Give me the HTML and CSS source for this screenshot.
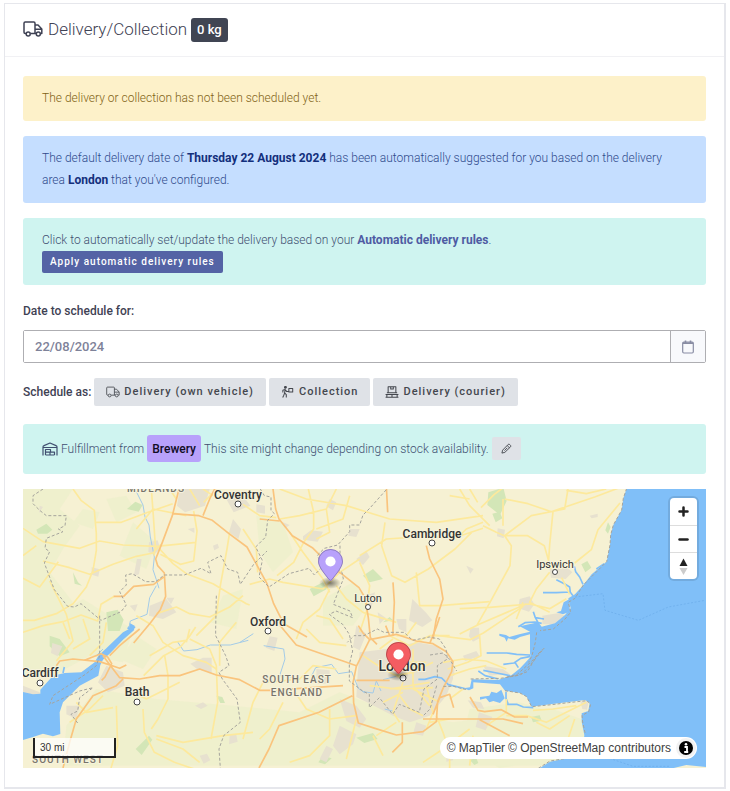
FILE: index.html
```html
<!DOCTYPE html>
<html lang="en">
<head>
<meta charset="utf-8">
<meta name="viewport" content="width=device-width, initial-scale=1">
<title>Delivery/Collection</title>
<link rel="stylesheet" href="styles.css">
</head>
<body>
<svg class="defs" aria-hidden="true">
  <symbol id="truck" viewBox="0 0 20 16">
    <path d="M3 12.5H2.2A1.2 1.2 0 0 1 1 11.3V2.2A1.2 1.2 0 0 1 2.2 1h8.6A1.2 1.2 0 0 1 12 2.2v10.3H7.5M12 4h3l3.8 4v4.500H17.500M12 8.200h6.500M12 12.500h1"/><circle cx="5.200" cy="13" r="2"/><circle cx="15.300" cy="13" r="2"/>
  </symbol>
  <symbol id="carry" viewBox="0 0 14 14">
    <circle cx="4" cy="1.600" r="1.100" fill="currentColor"/><path d="M3.800 3.800 3 8l2 2v3.500M3 8.500 2 11 .8 13.500M3.500 4 1 5v2.500M4 4.500l1.500 2H8M8 3h4.500v4H8z"/>
  </symbol>
  <symbol id="pallet" viewBox="0 0 16 14">
    <path d="M3.500 1h9v7h-9zM6.500 1v2.500h3V1M.500 10h15M.500 13h15M2 10v3M8 10v3M14 10v3M2 8h12"/>
  </symbol>
  <symbol id="warehouse" viewBox="0 0 16 14">
    <path d="M1 13.500V5Q1 4 2 3.600L8 1l6 2.600q1 .4 1 1.400v8.500M1 5.500h14M3.500 13V7.500h5V10M3.500 10.200h9V13M3.500 13h9M8 10v3"/>
  </symbol>
  <symbol id="pencil" viewBox="0 0 12 12">
    <path d="M1 11l.8-3.200 6-6.200a1.200 1.200 0 0 1 1.600 0l1 1a1.200 1.200 0 0 1 0 1.600l-6.200 6zM6.800 2.800l2.500 2.500M3.800 8.300l3-3"/>
  </symbol>
  <symbol id="calendar" viewBox="0 0 12 14">
    <rect x=".700" y="2.200" width="10.600" height="10.800" rx="1.200"/><path d="M.700 3.300h10.600M3.500.500v2M8.500.500v2" stroke-width="1.600"/>
  </symbol>
  <symbol id="pin" viewBox="0 0 27 41">
    <path stroke="none" d="M27 13.500c0 5.600-6.700 13.600-11.700 19.900-1 1.300-2.600 1.300-3.600 0C6.700 27 0 19.100 0 13.500a13.500 13.500 0 0 1 27 0z"/>
    <path d="M26.500 13.500C26.500 19 19.800 27 14.900 33c-.8 1-2 1-2.800 0C7.200 27 .5 19 .5 13.500a13 13 0 0 1 26 0z" fill="none" stroke="#000" stroke-opacity=".25"/>
    <circle cx="13.500" cy="13.500" r="5.500" fill="#fff" stroke="none"/>
  </symbol>
</svg>

<main class="card">
  <header class="card-header">
    <h1><svg class="icon icon-title"><use href="#truck"/></svg> Delivery/Collection</h1>
    <span class="badge badge-dark">0 kg</span>
  </header>

  <div class="card-body">
    <p class="alert alert-warning">The delivery or collection has not been scheduled yet.</p>
    <p class="alert alert-info">The default delivery date of <strong>Thursday 22 August 2024</strong> has been automatically suggested for you based on the delivery area <strong>London</strong> that you've configured.</p>
    <div class="alert alert-teal">
      <p>Click to automatically set/update the delivery based on your <a href="#rules">Automatic delivery rules</a>.</p>
      <button type="button" class="btn btn-primary">Apply automatic delivery rules</button>
    </div>

    <label class="label" for="date">Date to schedule for:</label>
    <div class="input-group">
      <input id="date" type="text" value="22/08/2024">
      <button type="button" aria-label="Open calendar"><svg class="icon icon-calendar"><use href="#calendar"/></svg></button>
    </div>

    <div class="schedule">
      <span class="label">Schedule as:</span>
      <button type="button" class="btn btn-light"><svg class="icon icon-wide"><use href="#truck"/></svg>Delivery (own vehicle)</button>
      <button type="button" class="btn btn-light"><svg class="icon icon-wide"><use href="#carry"/></svg>Collection</button>
      <button type="button" class="btn btn-light"><svg class="icon icon-wide"><use href="#pallet"/></svg>Delivery (courier)</button>
    </div>

    <div class="alert alert-teal fulfillment">
      <svg class="icon icon-site"><use href="#warehouse"/></svg>
      <span>Fulfillment from</span>
      <span class="badge badge-purple">Brewery</span>
      <span>This site might change depending on stock availability.</span>
      <button type="button" class="btn btn-light btn-edit" aria-label="Change site"><svg class="icon icon-edit"><use href="#pencil"/></svg></button>
    </div>

    <section class="map" aria-label="Map">
      <svg class="map-canvas" viewBox="0 0 683 279" preserveAspectRatio="xMidYMid slice">
        <defs>
          <radialGradient id="shade"><stop offset="0" stop-opacity=".5"/><stop offset="1" stop-opacity="0"/></radialGradient>
        </defs>
        <rect class="land" width="683" height="279"/>
        <g transform="scale(.33333)">
          <!-- grassland -->
          <g class="grass">
            <path d="M0 0H150L110 60 170 110 120 180 80 250 150 340 60 420 0 460zM100 380 180 330 260 380 330 420 300 520 200 500 90 560 0 560V430zM330 100 400 160 370 240 290 200zM600 320 660 300 640 420 560 400zM250 30l60-10 30 50-60 30zM180 60l50 10-20 50-60-20zM220 600l180 30 230 20 200 20 120-60 160 60 180 30 300-40 170 60 60 110H120l10-120zM340 440l60 40-40 60-70-30zM700 80l80 20 30 90-60 60-40-60zM900 330l90-50 50 60-50 70-90 0zM1340 660l150-20 100 30 60 60-40 80-180 27-120-60z"/>
          </g>
          <g class="wood">
            <path d="M40 122l30-18 18 18-15 12-28 0zM312 60l25-22 22 10-12 20zM250 370l34-8 18 30-12 34-35 0zM80 440l30 10 30 40-30 12-30-30zM338 780l40-40 10 12-32 46zM580 620l18 4 8 18-14 0zM150 250l15 30 12 10-22-6zM1396 10l45-14 10 40-20 42-38-30zM1408 74l22-6 8 20-20 12zM1675 226l18-10 12 20-18 14zM1755 100l8 14-8 20-8-10zM1524 684l26-5 6 16-26 5zM1340 812l20-4 6 14-12 6zM1000 746l50-14 14 18-40 12zM900 800l26 8-20 18-20-6zM860 300l40-20 12 20-40 22zM1020 260l30-20 30 30-40 10zM1080 400l20-16 10 10z"/>
          </g>
          <!-- towns -->
          <g class="town">
            <path d="M470 0h90l-14 50-60 20-24-20zM630 90l24 30-8 30-28-20zM378 160l26-6 8 26-20 18-16-10zM342 210l14 0-8 46-16 6zM206 235l24 6-4 22-20-6zM380 350l50-20 30 40-40 20-42-10zM430 326l24 0-10 20zM610 30l50-10 22 30-50 20zM540 506l26 0 0 46-44-12-20-16zM250 530l50 20 5 40-50 20-30-30zM130 650l40 0-10 40-30-14zM88 462l30 10-14 30-20-10zM0 590l50 20 10 30-60 0zM620 738l20 0 4 20-26 8zM320 350l24-4-8 22zM494 120l20-4 0 16zM516 650l24-10 14 10-20 10zM530 800l22-6 10 20-20 10zM50 50l10 4-12 18zM570 170l14-6 4 12-14 8zM864 124l36 4-16 30-44-6 0-10zM1000 210l30-24 10 18-20 24zM1030 320l26-10-10 44-20-12zM1064 370l24 16-18 20zM920 30l20 10-10 24-20-12zM980 120l30 0-10 24-24-4zM700 46l26 4 0 24-26-4zM740 442l24 4-10 40-26-10zM780 100l20 8-14 10z"/>
            <path d="M1010 490l80-10 90-20 60 10 50 50 0 50-20 50-50 60-60 20-50-20-50-26-60-30 4-70zM1000 410l30 24-20 50-20-10zM1168 330l40 40 20 24-30 20-40-20zM1120 390l30 0 0 40-22-10zM880 540l40 4 0 40-40 0zM950 630l50 20 30 40-20 26-40-20zM950 710l50 26-10 30-40 30-20-26zM1180 700l30 10-10 30-30-6zM910 770l20 10-20 40-20-10zM1270 800l20-6 0 20-20 4zM1424 118l22 4-4 26-20-6zM1490 330l30-8 14 24-16 22-32-10zM1580 240l50-6 18 16-20 20-44-4zM1558 380l50-8 20 10-30 24-40 0zM1342 416l26 0 2 32-20 10-12-16zM1320 500l40-14 10 16-44 14zM1380 530l60 10 20 14-60 6zM1368 670l40 14-20 40-30-10zM1334 634l40 6 10 20-34-4zM1672 638l26-4-6 28-14-2zM1700 80l24-6 0 10-18 4zM1330 230l22 10-10 14zM1254 530l40 0 0 30-40 6z"/>
          </g>
          <!-- sea and estuaries -->
          <g class="water">
            <path d="M1811-2 1801 28 1796 63 1771 108 1763 138 1761 168 1751 218 1721 243 1706 256 1681 288 1656 316 1636 328 1643 358 1626 378 1596 403 1556 413 1546 400 1490 412 1521 428V493L1523 503 1508 520 1491 538 1466 558 1426 573 1346 571 1341 595 1321 598 1338 604 1351 598V580L1431 586 1446 605 1491 612 1511 623 1526 653 1581 646 1631 640 1686 633 1700 641 1696 666 1676 673V698L1684 738 1681 768 1631 808 1581 818 1546 840H1940L1990 828 2049 834V-2z"/>
            <path d="M0 609 30 616 52 614 52 602 90 560 125 552 175 550 215 520 226 500 250 478 300 430 318 420 320 402 335 410 333 424 300 452 262 492 240 512 232 528 226 560 170 590 120 640 110 670 112 735 90 742 60 734 30 744 0 753zM312 418l10-12 16 8-12 14z"/>
            <path d="M1371 624l28-4 6-12 16 4 14-10 10 26-14 14-20-6-12 4-10-12-18 4z"/>
            <path d="M1640 330l-18 10-8 26-14 4 20 6 20-8z"/>
            <path d="M1429 434l20 4 10 6 30-8 32-8 0 8-30 8-16 8-20-4-4 10-6-12-16-6z"/>
          </g>
          <g class="creek">
            <path d="M1600 272l24 12 16 10 2 16 8 10M1560 311h40l40-2M1654 232l4 16 12 16 10 22M1720 240l24-16M1486 413l20-12 30-2 20 4M1531 368l6 18 8 14M1537 386l26 4M1391 492l60 0 30 4 40 2M1441 526l32-4 20-14 30-6M1476 520l10 16M1366 546l20 14 40 10M1381 544l40 8 40 8M1186 571l20 0 30-8 20 4 20 20 25 6 24 6M1449 608l0 20 6 16M1451 646l30 0 20 8 30 2M120 552l4-18"/>
          </g>
          <g class="river">
            <path d="M340 8l20 40 6 36 12 24 4 36 12 60-4 38 10 30 8 26M400 290l-20 36-8 50-50 20-4 20M462 456l20 30 40-4 40-14 60 0 54-14M651 460l40-26M722 470l60 10 4 30-16 50 36 4M866 560l12-24 48-10 20 28 40-6 20 50 20 14M1020 608l30 4 10-36 14 30M1080 572l40-10M240 480l-20 20M1085 660l30 8"/>
          </g>
          <!-- minor roads -->
          <g class="road">
            <path d="M150 0l24 34 40 30 6 70 0 50-10 60-20 50-40 50-50 30-66 20-34 0M0 118l60 40 110 20 60-22 70 12 100 4 120-12M215 100l80 0 80-30 74-26M60 216l80 20 60 20 70-30 70-24 50-10 24-26M0 268l50 26 56-76M0 430l60-20 60-12 54-20 50 18 10-50 40-24M80 276l50 100 20 80-50 60M180 390l20 60-50 30M385 0l6 80 6 90-4 30M512 66l10 60-10 90-40 10-60-30M620 130l-8 50-20 110-12 90-60 60M410 180l40 44 40 30 80 30 100 60 10 4M400 374l60-20 40 20 60 10 60-30 40-34M340 380l50 30 30 50 60 40 70 20 30 20M540 0l30 20M340 120l50-60 100 20M0 200l40-30"/>
            <path d="M440 0l20 30M500 0l30 50M582 0l-40 40M250 400l-10 60-40 40M120 400l20 50M280 650l4 120-20 67M360 660l4 70 30 60 60 30 90 30M362 560l60-60 50-26 26-30 20-30M425 500l10 60 0 70-30 60-20 30M310 600l60 30 60-30 40-20M380 500l70-40 40-6M500 450l60 30 20 50 4 110-20 110M400 740l80 20 120-20 90-10M400 750l80 30 50 40M140 700l60-40 40-40M160 640l30 30 80-14M500 420l-10 40M640 400l-50 60 0 70"/>
            <path d="M660 46l50 34 50 6M660 120l40 60 4 70M856 0l16 70 0 50-30 40-30 60-50 40M770 90l60-10 80-20 30-60M940 0l-30 60 10 70-40 20M800 130l40 60 60 80 20 40M770 0l80 30 120 20 130 40 140 10 140-20M980 20l-20 70-80 30M1010 210l-60 40-50 50-120-20-40-10-60 16M1010 200l80-50 120-8 80 6 90-30M1010 220l30 70-10 80-20 60M1086 100l-10 70 30 90 40 20 70-40 80-60 50-50M1180 250l10 100 60 0 150-12M940 290l30 40 50 40 100 30M920 300l-30 60-50 40-20 50M1400 110l-60-60-30-50M1300 150l30-30 50-20M1180 400l-30 40-30 0M880 380l40 10 40 60"/>
            <path d="M1374 56l40-40 40-30M1380 110l40 20 24 10 70 0 50 30 20 70M1445 30l70 14 70 24 130-44 80-30M1445 140l80-60 100-20 10-60M1445 140l20 30-4 60-60 110-40 70M1590 68l-10 100-4 60M1440 30l0 80M1655 222l50-40 20-60 66-80M1580 250l-40 50-20 40 60 30M1520 345l-120 10-90 4M1520 345l60 14 50-30M1510 345l-140 60-60 30M1640 316l-24-50M1500 340l-20 50"/>
            <path d="M1100 440l60 30 60-30 60 0M1100 600l120-20M1040 590l80 10 110-4M1170 480l0 110 50 60M1140 580l-30 90 20 30M1210 590l20 80-20 50M1170 600l80 40M1080 640l60-30M1020 500l60 40 60 30M940 540l-70-10-40 40-100 10M810 600l40 60 70 30 80-10M780 640l-40 80-30 30M920 660l0 80-60 60-60 20M1000 690l-30 120M720 580l-30 60-30 110M1050 740l30 60M1220 700l60-10M1120 700l-60 40M1200 820l60-40 80-60M1070 480l40-30M850 420l40 40 80 10M1120 560l50-10 60-30M1100 540l60-20 50 0M1130 620l30 40 40 20"/>
            <path d="M1231 438l110 14 40-20 60-40 60-40M1370 440l4 60-40 20-60 20M1260 520l60-10 70 6 60 24M1280 560l60-20 50-10M1660 650l-70 10-60 4M1690 640l-120 60-60-20-60 0M1540 700l40 20 60-40M1240 680l20 50 20 60 0 47M1320 600l-40 30M1390 710l60-40 0-40M1350 740l-10 90M1655 690l-20 60"/>
            <path d="M1340 0l24 40M1750 0l-60 14-60-10M1280 20l60 10"/>
          </g>
          <!-- motorways -->
          <g class="motorway">
            <path d="M468 0l-20 80-30 80-20 50 6 20 20 22 4 70-16 40-30 40-50 60M448 74l80 6 40 14 50 40 54 40 60 110 20 60 30 60 70 40M540 80l20-50 20-40M272 322l30 0 30-30 60-6 30-22"/>
            <path d="M100 530l10-14 40-6 80 8 60 20 20-10M260 500l30-30 60-50M240 500l50 66 60 4 60-10 60 0 60-20 50 18 70 14 60 32 30 0 220-14M300 570l-20 20-70 30-50 70-20 70-20 77M184 514l50-20 20 10 12 20-20 40-10 10"/>
            <path d="M750 0l8 60 10 30 40 50 60 36 60 60 30 20 50 40 18 30 10 60 6 60 20 20M1090-10l4 80M1210 170l10 40 30 60 10 60-20 60-10 60M1110 280l4 60-4 80 0 20M770 408l50 60 80 28 60 20 40 14M710 90l60 6"/>
            <path d="M1040 452l80-16 60 20 50 8 40 24 20 30-4 30-26 50-16 40-4 60-40 30-80 10-64-20-50-16-14-60-2-60 10-50zM1040 452l-20-20-14-22M1088 410l12 30M988 620l-100 50-120 40-30 70-30 57M1138 700l0 60-30 30M1200 690l240 0 60 14M1341 624l24 40 20 4 50-6 40 22 40 0M1000 574l100 0M1220 464l20-50 10-30M1230 676l20-50 30-10 12 40M1370 692l90 48"/>
          </g>
          <!-- county borders -->
          <g class="border">
            <path d="M60 0l-30 20 0 24 20 20 20 16 60 0-4 30-20 10 14 8-50 20-4 30 14 10-16 34 30 80 40 50 20 2 20-10 60 50 60-26 16-20-20-40 20-20-2-30 20-4 40 24 30 0 26-20 60 0 50-20 30 16-10-34 40-20 20 40 30 10 8 36 40-60 40-40"/>
            <path d="M580 320l-2 100 0 20 30 60 10 30-30 20 10 20 44 60 10 70-50 40-14 40 4 57M230 380l0 120-10 30-30 24-100 66-10 26 90-40 40-10-40 30-6 40-20 10 20 26"/>
            <path d="M712 0l12 20 20 4 0 40 10 10-20 20-6 50-30 30 20 40-10 50 30 30 60-40 60-16 16 20 20-20-10-40 20-20 40-10 36-40 0-20 30 0 10-30 20-20 50-56M951 170l0 40-24 20 30 20 4 20-20 50-10 26 50 20 8 20-50-20-20 10 40 30 20 30 10 50-10 40 0 50 40 30 20 10 0 40 30-30 40 50 20-30 60 24 14-70 40-30 0-40 30-20-4-30-20-30-30-6-50 10-26-24-60 0-20-10-40 20-30 0-20 20"/>
            <path d="M1221 498l40-6 20 20 20 34M1343 570l90-2 60-10 20-20 50-60-20 20-30 50-40 14-20 2 30-8 44-40 30-34M1541 430l-4 30-10 40-10 20M1811-2l-10 30-5 35-25 45-8 30-2 30-10 50-30 30-40 40-25 40-20 12 7 30-17 20-35 30-40 5M1446 605l45 7 20 11 15 30 60-6 50-6 55-6 12 10-6 24-20 10 2 20 8 36M1546 838l35-22 50-8M1261 592l30 0 40 10M1241 590l-20 70-20 20" />
          </g>
          <path class="ferry" d="M1656 324l84-10 6 50 100 30 90-40 110-20M1760 808l70 24 110 0"/>
        </g>

        <g class="city">
          <text x="215" y="10">Coventry</text><text x="409" y="49">Cambridge</text><text x="245" y="137">Oxford</text>
          <text x="17" y="188">Cardiff</text><text x="114" y="207">Bath</text>
        </g>
        <text class="capital" x="379" y="182">London</text>
        <g class="place"><text x="345" y="113">Luton</text><text x="532" y="79">Ipswich</text></g>
        <g class="region">
          <text x="133" y="3">MIDLANDS</text><text x="274" y="194">SOUTH EAST</text><text x="274" y="207">ENGLAND</text><text x="45" y="274">SOUTH WEST</text>
        </g>
        <g class="dot">
          <circle cx="215" cy="15" r="3"/><circle cx="409" cy="54" r="3"/><circle cx="245" cy="142" r="3"/><circle cx="17" cy="194" r="3"/><circle cx="114" cy="213" r="3"/><circle cx="380" cy="189" r="3"/>
          <circle cx="345" cy="118" r="2.500"/><circle cx="532" cy="83" r="2.500"/>
        </g>
        <ellipse cx="307" cy="94" rx="11" ry="6" fill="url(#shade)"/>
        <ellipse cx="375" cy="186" rx="11" ry="6" fill="url(#shade)"/>
        <use href="#pin" x="295" y="60" width="25" height="38" fill="#b8a1fb"/>
        <use href="#pin" x="363" y="153" width="25" height="38" fill="#f45d62"/>
      </svg>

      <div class="map-controls">
        <button type="button" aria-label="Zoom in"><svg viewBox="0 0 27 27"><path d="M13.500 9.500v8M9.500 13.500h8" stroke="#222" stroke-width="2.500" stroke-linecap="round"/></svg></button>
        <button type="button" aria-label="Zoom out"><svg viewBox="0 0 27 27"><path d="M9.500 13.500h8" stroke="#222" stroke-width="2.500" stroke-linecap="round"/></svg></button>
        <button type="button" aria-label="Reset bearing to north"><svg viewBox="0 0 27 27"><path d="M9.500 13l4-7.500 4 7.500z" fill="#222"/><path d="M9.500 15l4 7 4-7z" fill="#ccc"/></svg></button>
      </div>
      <div class="map-scale">30 mi</div>
      <div class="map-credits"><a href="#maptiler">© MapTiler</a> <a href="#osm">© OpenStreetMap contributors</a>
        <button type="button" aria-label="Toggle attribution"><svg viewBox="0 0 20 20"><circle cx="10" cy="10" r="7" fill="#000"/><path d="M8.500 9H11v4.500M8.200 14h4" fill="none" stroke="#fff" stroke-width="1.800"/><circle cx="10" cy="6.300" r="1.300" fill="#fff"/></svg></button>
      </div>
    </section>
  </div>
</main>
</body>
</html>
```

FILE: styles.css
```css
* { box-sizing: border-box; }

body {
  margin: 0;
  padding: 3px 4px;
  background: #fff;
  color: #3f4254;
  font-family: Roboto, "Liberation Sans", sans-serif;
  font-size: 12px;
  font-weight: 300;
  line-height: 22px;
}

p, h1 { margin: 0; }
button, input { font: inherit; color: inherit; }
button { cursor: pointer; }

.defs { position: absolute; width: 0; height: 0; }

.icon {
  flex: none;
  fill: none;
  stroke: currentColor;
  stroke-width: 1.2;
  stroke-linejoin: round;
}
.icon-title { width: 20px; height: 16px; stroke-width: 1.5; }
.icon-wide { width: 14px; height: 12px; }
.icon-site { width: 16px; height: 14px; }
.icon-edit { width: 11px; height: 11px; stroke-width: 1; }
.icon-calendar { width: 12px; height: 14px; }

.card {
  border: 1px solid #e6e7ec;
  border-width: 1px 2px 2px 1px;
}

.card-header {
  display: flex;
  align-items: flex-start;
  gap: 4px;
  padding: 14px 18px;
  border-bottom: 1px solid #f1f1f4;
}
.card-header h1 {
  display: flex;
  align-items: center;
  gap: 5px;
  font-size: 17px;
  font-weight: 300;
  line-height: 22px;
}

.badge {
  border-radius: 3px;
  font-weight: 500;
}
.badge-dark {
  padding: 1px 6px;
  background: #404553;
  color: #fff;
  font-size: 13px;
}
.badge-purple {
  padding: 3px 5px 2px;
  background: #b8a1fb;
  color: #100c24;
}

.card-body { padding: 19px 18px; }

.alert {
  margin-bottom: 15px;
  padding: 11px 19px 12px;
  border-radius: 3px;
}
.alert-warning { background: #fdf1c9; color: #816316; }
.alert-info { background: #c5deff; color: #2f4a8c; }
.alert-info strong { color: #132f7c; font-weight: 700; }
.alert-teal { background: #cff4f0; color: #414f70; }
.alert-teal a { color: #4e5ba3; font-weight: 700; text-decoration: none; }

.btn {
  border: 0;
  border-radius: 2px;
  font-weight: 500;
  letter-spacing: 1px;
}
.btn-primary {
  display: block;
  padding: 0 8px;
  background: #5463a5;
  color: #fff;
  font-size: 10px;
}
.btn-light {
  display: flex;
  align-items: center;
  gap: 4px;
  padding: 3px 12px;
  background: #dfe2e7;
  color: #44474e;
  font-size: 11px;
}

.label { font-weight: 500; }
label.label { display: block; margin-bottom: 8px; }

.input-group {
  display: flex;
  height: 33px;
  border: 1px solid #aeaeb2;
  border-radius: 2px;
}
.input-group input {
  flex: 1;
  min-width: 0;
  padding: 0 11px;
  border: 0;
  background: #fff;
  color: #7e8299;
  font-size: 13px;
  font-weight: 500;
}
.input-group button {
  display: flex;
  align-items: center;
  justify-content: center;
  width: 35px;
  padding: 0;
  border: 0;
  border-left: 1px solid #aeaeb2;
  background: #f8f9fc;
  color: #888ca3;
}

.schedule {
  display: flex;
  flex-wrap: wrap;
  align-items: center;
  gap: 3px;
  margin: 15px 0 18px;
}

.fulfillment {
  display: flex;
  flex-wrap: wrap;
  align-items: center;
  gap: 3px;
}
.btn-edit { padding: 6px 9px; }

.map {
  position: relative;
  height: 279px;
  overflow: hidden;
  font-family: "Liberation Sans", sans-serif;
  font-weight: 400;
}
.map-canvas { display: block; width: 100%; height: 100%; }
.land { fill: #f6f1d3; }
.grass { fill: #edefcb; opacity: .7; }
.wood { fill: #d3e6b7; }
.town { fill: #e7e1cf; }
.water { fill: #80bff8; }
.creek, .river, .road, .motorway, .border, .ferry { fill: none; stroke-linejoin: round; }
.creek { stroke: #80bff8; stroke-width: 5; }
.river { stroke: #a3cbe8; stroke-width: 3; }
.road { stroke: #fde99c; stroke-width: 5; }
.motorway { stroke: #fac47d; stroke-width: 5; }
.border { stroke: #a5a49d; stroke-width: 3; stroke-dasharray: 9 6; }
.ferry { stroke: #69aae8; stroke-width: 2; stroke-dasharray: 6 5; }

.city, .capital, .place, .region {
  fill: #333;
  stroke: #f7f3dc;
  stroke-width: 2px;
  paint-order: stroke;
  text-anchor: middle;
  font-family: Roboto, sans-serif;
}
.city { font-size: 12px; font-weight: 500; }
.capital { font-size: 14px; font-weight: 500; }
.place { font-size: 11px; font-weight: 400; }
.region { fill: #77746b; font-size: 10px; font-weight: 500; letter-spacing: 1px; }
.dot { fill: #fff; stroke: #444; stroke-width: 1; }

.map-controls {
  position: absolute;
  top: 9px;
  right: 9px;
  width: 27px;
  border-radius: 4px;
  background: #fff;
  box-shadow: 0 0 0 2px rgb(0 0 0 / 10%);
}
.map-controls button {
  display: block;
  width: 27px;
  height: 27px;
  padding: 0;
  border: 0;
  background: none;
}
.map-controls button + button { border-top: 1px solid #ddd; }
.map-controls svg { display: block; width: 27px; height: 27px; }

.map-scale {
  position: absolute;
  left: 10px;
  bottom: 10px;
  width: 83px;
  height: 20px;
  padding: 0 5px;
  border: 2px solid #222;
  border-top: 0;
  background: rgb(255 255 255 / 75%);
  color: #333;
  font-size: 10px;
  line-height: 20px;
}

.map-credits {
  position: absolute;
  right: 9px;
  bottom: 9px;
  display: flex;
  align-items: center;
  gap: 3px;
  padding: 0 1px 0 7px;
  border-radius: 12px;
  background: #fff;
  font-size: 12px;
}
.map-credits a { color: #404040; text-decoration: none; }
.map-credits button {
  width: 20px;
  height: 20px;
  margin-left: 2px;
  padding: 0;
  border: 0;
  border-radius: 50%;
  background: #f2f2f2;
}
.map-credits svg { display: block; width: 20px; height: 20px; }
```
